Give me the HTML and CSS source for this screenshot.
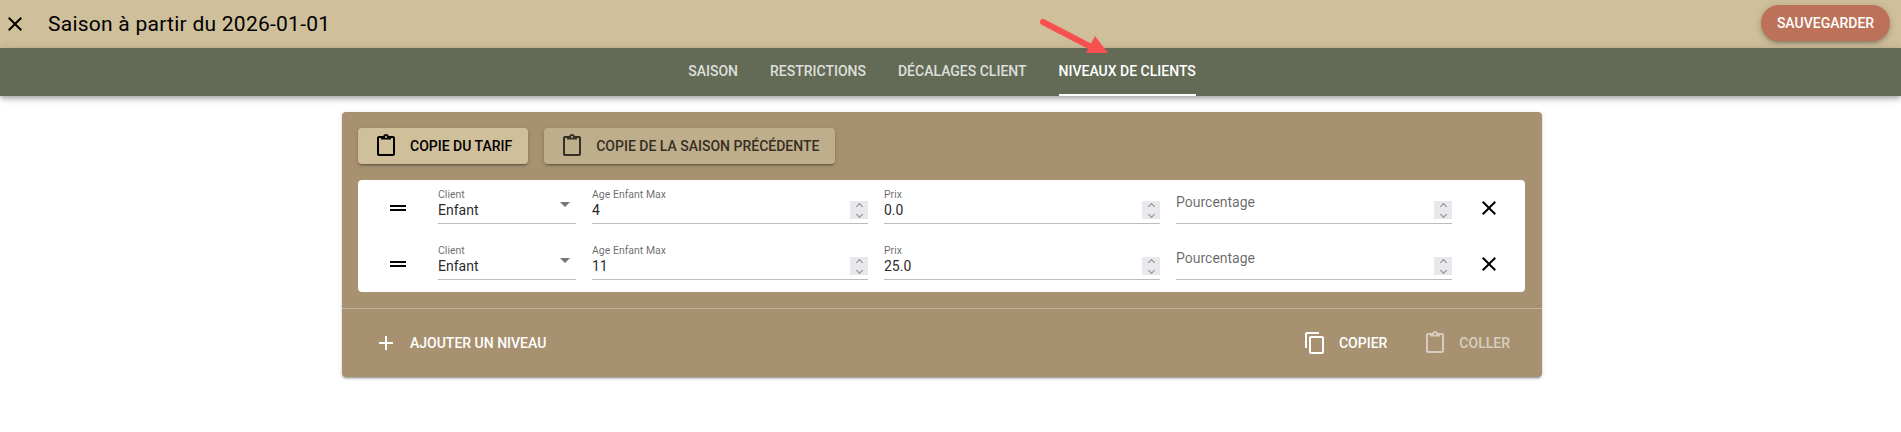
FILE: index.html
```html
<!DOCTYPE html>
<html lang="fr">
<head>
  <meta charset="UTF-8" />
  <meta name="viewport" content="width=device-width, initial-scale=1.0" />
  <title>Saison à partir du 2026-01-01</title>
  <link rel="stylesheet" href="styles.css">
</head>
<body>
  <header class="topbar">
    <button class="icon-btn close-btn">
      <svg viewBox="0 0 24 24" class="icon"><path d="M19 6.41L17.59 5 12 10.59 6.41 5 5 6.41 10.59 12 5 17.59 6.41 19 12 13.41 17.59 19 19 17.59 13.41 12z"/></svg>
    </button>
    <h1>Saison à partir du 2026-01-01</h1>
    <button class="save-btn">Sauvegarder</button>
  </header>

  <nav class="tabs">
    <a class="tab">Saison</a>
    <a class="tab">Restrictions</a>
    <a class="tab">Décalages client</a>
    <a class="tab active">Niveaux de clients</a>
  </nav>

  <svg class="arrow" viewBox="0 0 80 50"><path d="M3 7 L53 33" stroke="#f8504f" stroke-width="6" stroke-linecap="round" fill="none"/><path d="M46 38 L68 38 L55 21 z" fill="#f8504f"/></svg>

  <main class="card">
    <div class="card-top">
      <button class="copy-btn">
        <svg viewBox="0 0 24 24" class="icon"><path d="M19 2h-4.18C14.4.84 13.3 0 12 0c-1.3 0-2.4.84-2.82 2H5c-1.1 0-2 .9-2 2v16c0 1.1.9 2 2 2h14c1.1 0 2-.9 2-2V4c0-1.1-.9-2-2-2zm-7 0c.55 0 1 .45 1 1s-.45 1-1 1-1-.45-1-1 .45-1 1-1zm7 18H5V4h2v1.5h10V4h2v16z"/></svg>
        Copie du tarif
      </button>
      <button class="copy-btn dim">
        <svg viewBox="0 0 24 24" class="icon"><path d="M19 2h-4.18C14.4.84 13.3 0 12 0c-1.3 0-2.4.84-2.82 2H5c-1.1 0-2 .9-2 2v16c0 1.1.9 2 2 2h14c1.1 0 2-.9 2-2V4c0-1.1-.9-2-2-2zm-7 0c.55 0 1 .45 1 1s-.45 1-1 1-1-.45-1-1 .45-1 1-1zm7 18H5V4h2v1.5h10V4h2v16z"/></svg>
        Copie de la saison précédente
      </button>
    </div>

    <div class="levels">
      <div class="level">
        <svg viewBox="0 0 24 24" class="icon drag"><path d="M20 9H4v2h16V9zM4 15h16v-2H4v2z"/></svg>
        <div class="field select"><label>Client</label><span class="value">Enfant</span><i class="caret"></i></div>
        <div class="field"><label>Age Enfant Max</label><span class="value">4</span><span class="spin"><i class="up"></i><i class="down"></i></span></div>
        <div class="field"><label>Prix</label><span class="value">0.0</span><span class="spin"><i class="up"></i><i class="down"></i></span></div>
        <div class="field empty"><span class="placeholder">Pourcentage</span><span class="spin"><i class="up"></i><i class="down"></i></span></div>
        <svg viewBox="0 0 24 24" class="icon remove"><path d="M19 6.41L17.59 5 12 10.59 6.41 5 5 6.41 10.59 12 5 17.59 6.41 19 12 13.41 17.59 19 19 17.59 13.41 12z"/></svg>
      </div>
      <div class="level">
        <svg viewBox="0 0 24 24" class="icon drag"><path d="M20 9H4v2h16V9zM4 15h16v-2H4v2z"/></svg>
        <div class="field select"><label>Client</label><span class="value">Enfant</span><i class="caret"></i></div>
        <div class="field"><label>Age Enfant Max</label><span class="value">11</span><span class="spin"><i class="up"></i><i class="down"></i></span></div>
        <div class="field"><label>Prix</label><span class="value">25.0</span><span class="spin"><i class="up"></i><i class="down"></i></span></div>
        <div class="field empty"><span class="placeholder">Pourcentage</span><span class="spin"><i class="up"></i><i class="down"></i></span></div>
        <svg viewBox="0 0 24 24" class="icon remove"><path d="M19 6.41L17.59 5 12 10.59 6.41 5 5 6.41 10.59 12 5 17.59 6.41 19 12 13.41 17.59 19 19 17.59 13.41 12z"/></svg>
      </div>
    </div>

    <footer class="card-actions">
      <button class="flat-btn add">
        <svg viewBox="0 0 24 24" class="icon"><path d="M19 13h-6v6h-2v-6H5v-2h6V5h2v6h6v2z"/></svg>
        Ajouter un niveau
      </button>
      <button class="flat-btn">
        <svg viewBox="0 0 24 24" class="icon"><path d="M16 1H4c-1.1 0-2 .9-2 2v14h2V3h12V1zm3 4H8c-1.1 0-2 .9-2 2v14c0 1.1.9 2 2 2h11c1.1 0 2-.9 2-2V7c0-1.1-.9-2-2-2zm0 16H8V7h11v14z"/></svg>
        Copier
      </button>
      <button class="flat-btn off">
        <svg viewBox="0 0 24 24" class="icon"><path d="M19 2h-4.18C14.4.84 13.3 0 12 0c-1.3 0-2.4.84-2.82 2H5c-1.1 0-2 .9-2 2v16c0 1.1.9 2 2 2h14c1.1 0 2-.9 2-2V4c0-1.1-.9-2-2-2zm-7 0c.55 0 1 .45 1 1s-.45 1-1 1-1-.45-1-1 .45-1 1-1zm7 18H5V4h2v1.5h10V4h2v16z"/></svg>
        Coller
      </button>
    </footer>
  </main>
</body>
</html>
```

FILE: styles.css
```css
* {
  box-sizing: border-box;
}

body {
  margin: 0;
  height: 432px;
  overflow: hidden;
  background: #fff;
  color: #000;
  font-family: Roboto, sans-serif;
}

button {
  border: none;
  background: none;
  padding: 0;
  font-family: inherit;
  text-transform: uppercase;
}

.icon {
  display: block;
  width: 24px;
  height: 24px;
  fill: currentColor;
  flex: none;
}

.topbar {
  height: 48px;
  background: #cfbf9b;
  display: flex;
  align-items: center;
  padding: 0 11px 0 3px;
}

.close-btn {
  width: 24px;
  height: 24px;
  margin-right: 21px;
}

.topbar h1 {
  flex: 1;
  margin: 0;
  font-size: 21px;
  font-weight: 400;
  letter-spacing: 0.25px;
}

.save-btn {
  width: 129px;
  height: 36px;
  margin-bottom: 2px;
  border-radius: 18px;
  background: #bd7158;
  color: #fff;
  font-size: 14px;
  font-weight: 500;
  box-shadow: 0 3px 3px -2px rgba(0, 0, 0, 0.2), 0 3px 4px rgba(0, 0, 0, 0.14), 0 1px 8px rgba(0, 0, 0, 0.12);
}

.tabs {
  height: 48px;
  background: #636b56;
  display: flex;
  justify-content: center;
  padding-right: 17px;
  box-shadow: 0 2px 4px -1px rgba(0, 0, 0, 0.2), 0 4px 5px rgba(0, 0, 0, 0.14), 0 1px 10px rgba(0, 0, 0, 0.12);
}

.tab {
  margin: 0 16px;
  line-height: 46px;
  font-size: 14px;
  font-weight: 500;
  text-transform: uppercase;
  color: rgba(255, 255, 255, 0.8);
  border-bottom: 2px solid transparent;
}

.tab.active {
  color: #fff;
  border-bottom-color: #fff;
}

.arrow {
  position: absolute;
  left: 1040px;
  top: 15px;
  width: 80px;
  height: 50px;
}

.card {
  width: 1200px;
  height: 265px;
  margin: 16px 0 0 342px;
  background: #a79170;
  border-radius: 4px;
  box-shadow: 0 3px 1px -2px rgba(0, 0, 0, 0.2), 0 2px 2px rgba(0, 0, 0, 0.14), 0 1px 5px rgba(0, 0, 0, 0.12);
}

.card-top {
  display: flex;
  gap: 16px;
  padding: 16px;
}

.copy-btn {
  height: 36px;
  padding: 0 16px;
  display: flex;
  align-items: center;
  gap: 12px;
  border-radius: 4px;
  background: #cfbf9b;
  color: #000;
  font-size: 14px;
  font-weight: 500;
  box-shadow: 0 3px 1px -2px rgba(0, 0, 0, 0.2), 0 2px 2px rgba(0, 0, 0, 0.14), 0 1px 5px rgba(0, 0, 0, 0.12);
}

.copy-btn.dim {
  background: #bfae8c;
  color: #352f24;
}

.levels {
  margin: 0 17px 0 16px;
  height: 112px;
  background: #fff;
  border-radius: 4px;
}

.level {
  height: 56px;
  display: flex;
  padding-left: 80px;
  gap: 16px;
  position: relative;
}

.drag {
  position: absolute;
  left: 28px;
  top: 16px;
}

.remove {
  margin: 16px 0 0 9px;
}

.field {
  position: relative;
  flex: none;
  width: 276px;
  height: 44px;
  border-bottom: 1px solid #bdbdbd;
  display: flex;
  flex-direction: column;
  justify-content: flex-end;
}

.field.select {
  width: 138px;
}

.field label {
  font-size: 10.5px;
  line-height: 12px;
  color: rgba(0, 0, 0, 0.6);
}

.field .value {
  font-size: 14px;
  line-height: 19px;
  margin-bottom: 3px;
  color: rgba(0, 0, 0, 0.87);
}

.placeholder {
  position: absolute;
  left: 0;
  top: 14px;
  font-size: 14px;
  line-height: 16px;
  color: rgba(0, 0, 0, 0.6);
}

.caret {
  position: absolute;
  right: 6px;
  top: 22px;
  border-left: 5px solid transparent;
  border-right: 5px solid transparent;
  border-top: 5px solid #757575;
}

.spin {
  position: absolute;
  right: 0;
  bottom: 4px;
  width: 18px;
  height: 18px;
  background: #e9e9ed;
  display: flex;
  flex-direction: column;
  align-items: center;
  justify-content: center;
  gap: 3px;
}

.spin i {
  display: block;
  width: 5px;
  height: 5px;
  border-left: 1px solid #8a8a8a;
  border-top: 1px solid #8a8a8a;
}

.spin .up {
  transform: rotate(45deg);
}

.spin .down {
  transform: rotate(225deg);
}

.card-actions {
  margin-top: 16px;
  height: 69px;
  border-top: 1px solid rgba(255, 255, 255, 0.3);
  display: flex;
  align-items: center;
  padding: 0 32px;
  gap: 36px;
}

.flat-btn {
  display: flex;
  align-items: center;
  gap: 12px;
  color: #fff;
  font-size: 14px;
  font-weight: 500;
}

.flat-btn.add {
  margin-right: auto;
}

.flat-btn.off {
  opacity: 0.55;
}
```
